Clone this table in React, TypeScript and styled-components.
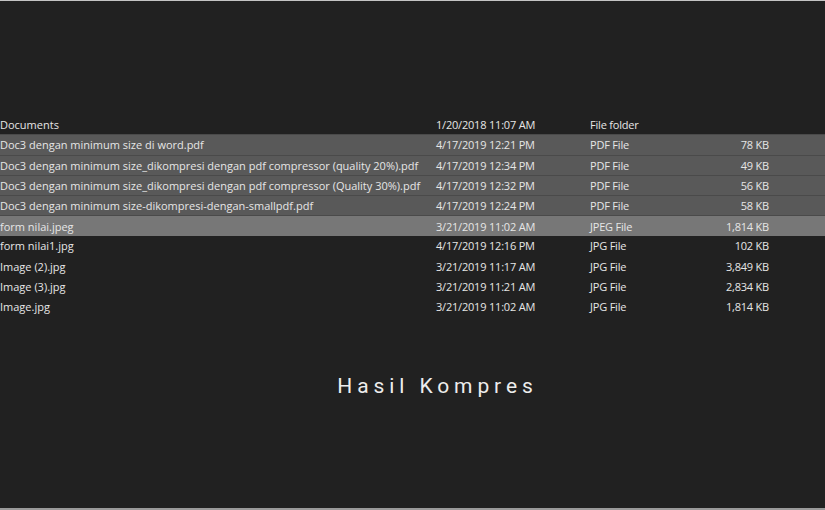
import React from "react";
import styled, { createGlobalStyle } from "styled-components";

const GlobalStyle = createGlobalStyle`
  html, body {
    margin: 0;
    padding: 0;
    background: #212121;
  }
`;

type FileRow = {
  name: string;
  date: string;
  type: string;
  size: string;
  tone: "none" | "selected" | "focus";
};

const files: FileRow[] = [
  { name: "Documents", date: "1/20/2018 11:07 AM", type: "File folder", size: "", tone: "none" },
  { name: "Doc3 dengan minimum size di word.pdf", date: "4/17/2019 12:21 PM", type: "PDF File", size: "78 KB", tone: "selected" },
  { name: "Doc3 dengan minimum size_dikompresi dengan pdf compressor (quality 20%).pdf", date: "4/17/2019 12:34 PM", type: "PDF File", size: "49 KB", tone: "selected" },
  { name: "Doc3 dengan minimum size_dikompresi dengan pdf compressor (Quality 30%).pdf", date: "4/17/2019 12:32 PM", type: "PDF File", size: "56 KB", tone: "selected" },
  { name: "Doc3 dengan minimum size-dikompresi-dengan-smallpdf.pdf", date: "4/17/2019 12:24 PM", type: "PDF File", size: "58 KB", tone: "selected" },
  { name: "form nilai.jpeg", date: "3/21/2019 11:02 AM", type: "JPEG File", size: "1,814 KB", tone: "focus" },
  { name: "form nilai1.jpg", date: "4/17/2019 12:16 PM", type: "JPG File", size: "102 KB", tone: "none" },
  { name: "Image (2).jpg", date: "3/21/2019 11:17 AM", type: "JPG File", size: "3,849 KB", tone: "none" },
  { name: "Image (3).jpg", date: "3/21/2019 11:21 AM", type: "JPG File", size: "2,834 KB", tone: "none" },
  { name: "Image.jpg", date: "3/21/2019 11:02 AM", type: "JPG File", size: "1,814 KB", tone: "none" },
];

export default function App() {
  return (
    <>
      <GlobalStyle />
      <Frame>
        <FileList>
          {files.map((file, index) => (
            <Row key={index} $tone={file.tone}>
              <Name>{file.name}</Name>
              <Date>{file.date}</Date>
              <Type>{file.type}</Type>
              <Size>{file.size}</Size>
            </Row>
          ))}
        </FileList>
        <Caption>Hasil Kompres</Caption>
      </Frame>
    </>
  );
}

const Frame = styled.div`
  width: 825px;
  height: 510px;
  box-sizing: border-box;
  background: #212121;
  border-top: 1px solid #c4c4c4;
  border-bottom: 2px solid #9a9a9a;
  display: flex;
  flex-direction: column;
  padding-top: 113px;
  overflow: hidden;
`;

const FileList = styled.div`
  display: flex;
  flex-direction: column;
`;

const Row = styled.div<{ $tone: "none" | "selected" | "focus" }>`
  display: grid;
  grid-template-columns: 436px 154px 130px 49px;
  align-items: center;
  height: 20.3px;
  box-sizing: border-box;
  font-family: "Open Sans", "Noto Sans", sans-serif;
  font-size: 11px;
  letter-spacing: -0.2px;
  color: #e6e6e6;
  white-space: nowrap;
  background: ${(p) =>
    p.$tone === "selected" ? "#595959" : p.$tone === "focus" ? "#777777" : "transparent"};
  border-top: ${(p) => (p.$tone === "none" ? "none" : "1px solid #4a4a4a")};
`;

const Name = styled.span`
  overflow: hidden;
  letter-spacing: 0;
`;

const Date = styled.span``;

const Type = styled.span``;

const Size = styled.span`
  text-align: right;
`;

const Caption = styled.div`
  margin-top: 57px;
  text-align: center;
  padding-left: 50px;
  font-family: Roboto, "Open Sans", sans-serif;
  font-size: 21px;
  letter-spacing: 4.9px;
  color: #ededed;
`;
